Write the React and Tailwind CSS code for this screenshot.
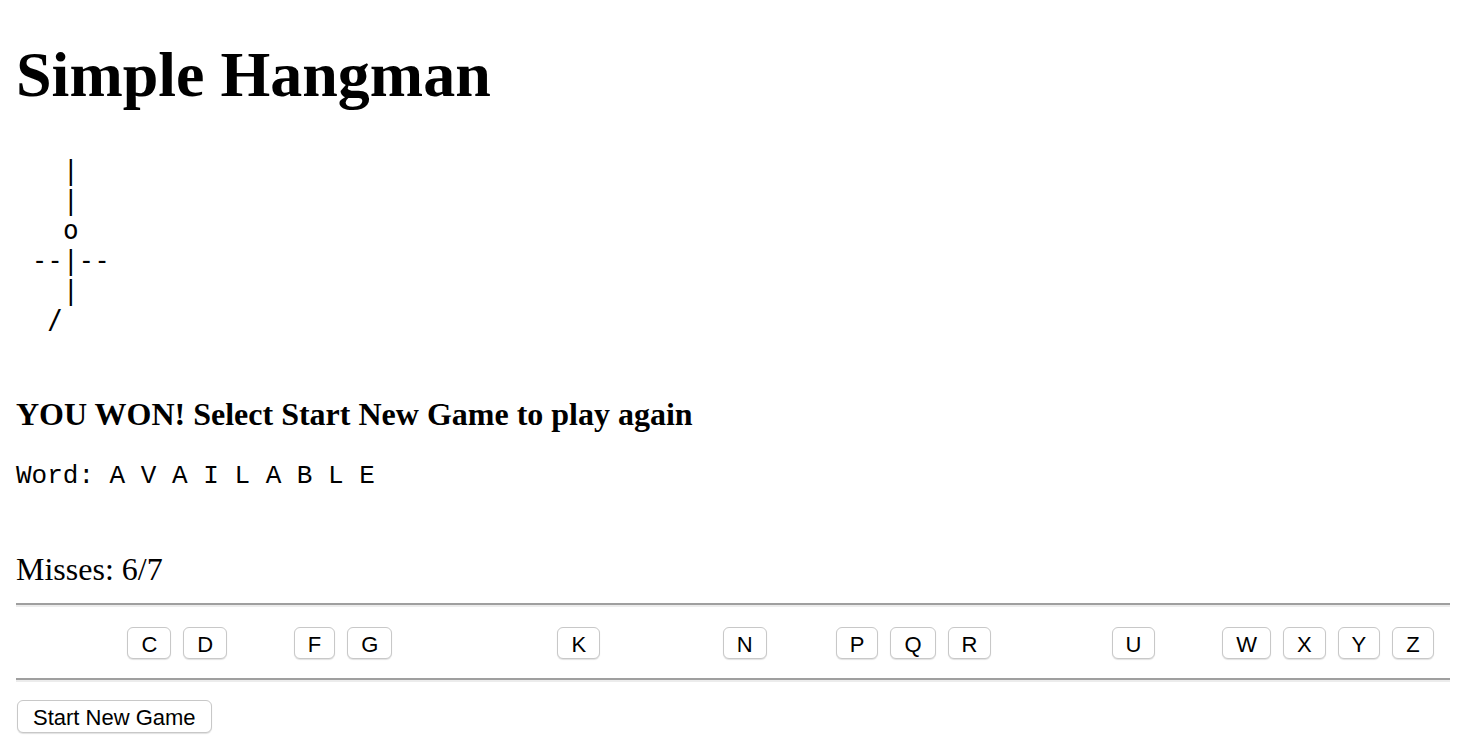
import React from 'react';

const ALPHABET = 'ABCDEFGHIJKLMNOPQRSTUVWXYZ'.split('');
const WORD = 'AVAILABLE';
const MISSED = ['C', 'D', 'F', 'G', 'K', 'N', 'P', 'Q', 'R', 'U', 'W', 'X', 'Y', 'Z'];

// letters already guessed are hidden but keep their slot
const guessed = new Set([...WORD.split(''), 'H', 'J', 'M', 'O', 'S', 'T']);

const GALLOWS = ['   |', '   |', '   o', ' --|--', '   |', '  /'].join('\n');

function LetterButton({ letter, hidden }) {
  return (
    <button
      className={
        'h-[32px] px-[13px] pt-[4px] pb-[1px] leading-[25px] text-[22px] text-black bg-white border border-[#c8c8c8] rounded-[6px] shadow-[0_1px_1px_rgba(0,0,0,0.12)] ' +
        (hidden ? 'invisible' : 'visible')
      }
      style={{ fontFamily: '"Liberation Sans", Arial, sans-serif' }}
    >
      {letter}
    </button>
  );
}

export default function App() {
  return (
    <div
      className="min-h-screen bg-white text-black pl-[16px] pr-[18px] flex flex-col"
      style={{ fontFamily: '"Liberation Serif", "Times New Roman", serif' }}
    >
      <h1 className="mt-[38px] text-[64px] leading-[74px] font-bold">Simple Hangman</h1>

      <pre
        className="mt-[43px] text-[26px] leading-[30px] whitespace-pre"
        style={{ fontFamily: '"DejaVu Sans Mono", monospace' }}
      >
        {GALLOWS}
      </pre>

      <h4 className="mt-[61px] text-[32px] leading-[37px] font-bold">
        YOU WON! Select Start New Game to play again
      </h4>

      <div
        className="mt-[28px] text-[26px] leading-[30px] whitespace-pre"
        style={{ fontFamily: '"Liberation Mono", "Courier New", monospace' }}
      >
        {'Word: ' + WORD.split('').join(' ')}
      </div>

      <div className="mt-[60px] text-[32px] leading-[37px]">Misses: {MISSED.length - 8}/7</div>

      <hr className="mt-[15px] border-0 border-t-2 border-b-2 border-t-[#9f9f9f] border-b-[#ececec]" />

      <div className="mt-[20px] pl-[2px] flex items-start gap-[12px]">
        {ALPHABET.map((l) => (
          <LetterButton key={l} letter={l} hidden={guessed.has(l)} />
        ))}
      </div>

      <hr className="mt-[19px] border-0 border-t-2 border-b-2 border-t-[#9f9f9f] border-b-[#ececec]" />

      <div className="mt-[18px] ml-[1px] flex">
        <button
          className="h-[33px] px-[15px] pt-[4px] pb-[2px] leading-[25px] text-[22px] text-black bg-white border border-[#c8c8c8] rounded-[6px] shadow-[0_1px_1px_rgba(0,0,0,0.12)]"
          style={{ fontFamily: '"Liberation Sans", Arial, sans-serif' }}
        >
          Start New Game
        </button>
      </div>
    </div>
  );
}
